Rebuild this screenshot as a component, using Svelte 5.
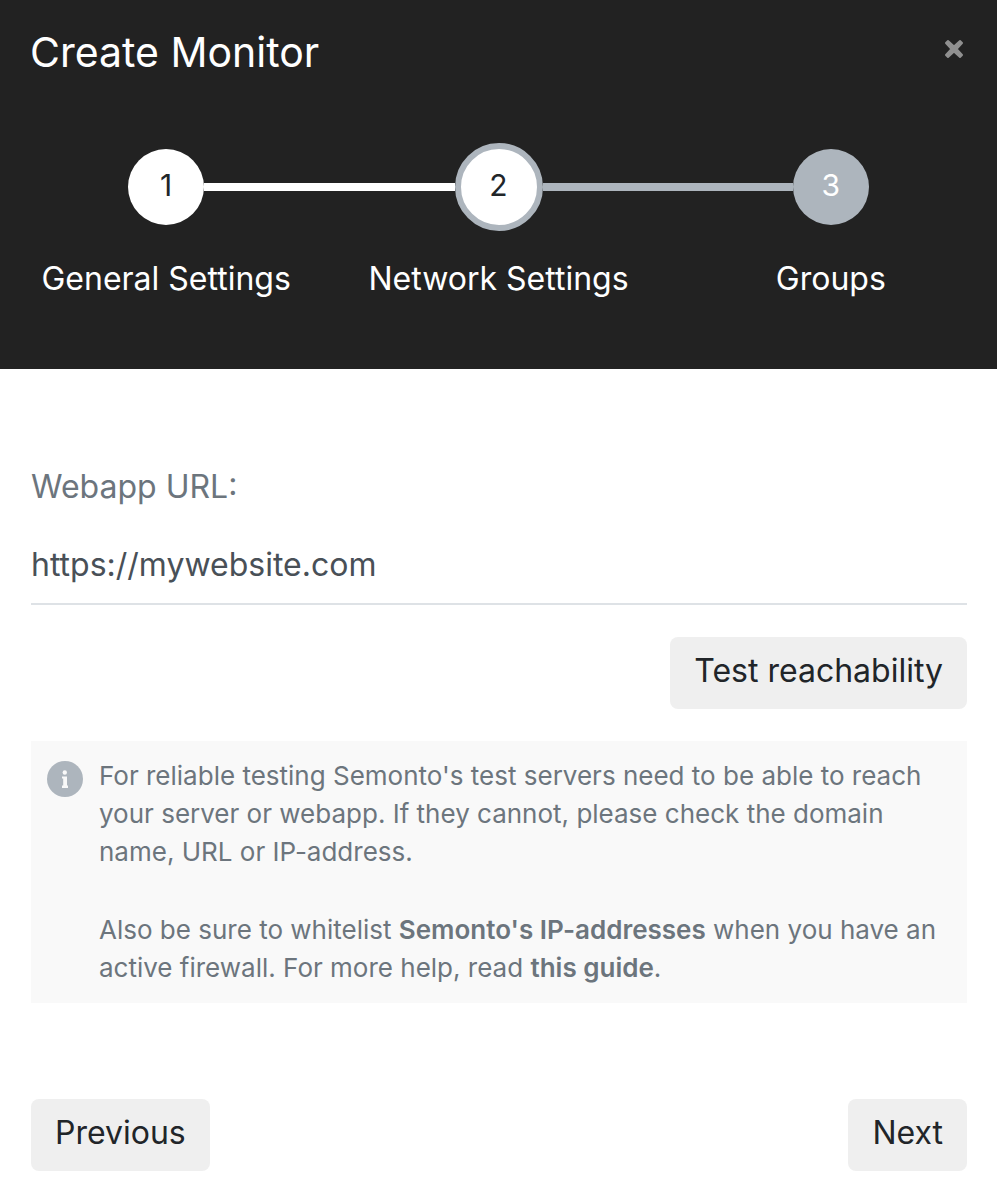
<script>
  const steps = [
    { label: 'General Settings', state: 'done' },
    { label: 'Network Settings', state: 'current' },
    { label: 'Groups', state: 'upcoming' }
  ];
  let url = $state('https://mywebsite.com');
</script>

<main class="dialog">
  <header class="header">
    <div class="title-row">
      <h1>Create Monitor</h1>
      <button class="close" type="button" aria-label="Close">
        <svg viewBox="0 0 20 20" width="20" height="20" aria-hidden="true">
          <path d="M2 4L4 2L10 7.500L16 2L18 4L12.500 10L18 16L16 18L10 12.500L4 18L2 16L7.500 10Z" fill="currentColor" stroke="currentColor" stroke-width="2" stroke-linejoin="round" />
        </svg>
      </button>
    </div>
    <ol class="steps">
      {#each steps as step, i}
        <li class={step.state} aria-current={step.state === 'current' ? 'step' : undefined}>
          <span class="marker">
            <span class="line" class:hidden={i === 0} class:filled={i === 1}></span>
            <span class="circle">{i + 1}</span>
            <span class="line" class:hidden={i === 2} class:filled={i === 0}></span>
          </span>
          <span class="label">{step.label}</span>
        </li>
      {/each}
    </ol>
  </header>

  <form class="body">
    <label for="url">Webapp URL:</label>
    <input id="url" type="text" bind:value={url} />
    <button class="btn test" type="button">Test reachability</button>

    <section class="info">
      <svg class="info-icon" viewBox="0 0 36 36" width="36" height="36" aria-hidden="true">
        <circle cx="18" cy="18" r="18" fill="#adb5bd" />
        <circle cx="17.800" cy="11.500" r="2.200" fill="#f9f9f9" />
        <path d="M15 15.500H20V24.500H21V27H15V24.500H16.200V17.500H15Z" fill="#f9f9f9" />
      </svg>
      <div class="info-text">
        <p>For reliable testing Semonto's test servers need to be able to reach your server or webapp. If they cannot, please check the domain name, URL or IP-address.</p>
        <p>Also be sure to whitelist <a href="#ip-addresses">Semonto's IP-addresses</a> when you have an active firewall. For more help, read <a href="#guide">this guide</a>.</p>
      </div>
    </section>

    <footer class="actions">
      <button class="btn" type="button">Previous</button>
      <button class="btn" type="button">Next</button>
    </footer>
  </form>
</main>

<style>
  :global(body) {
    margin: 0;
    background: #fff;
  }
  .dialog, .dialog * {
    box-sizing: border-box;
  }
  .dialog {
    font-family: Inter, "Open Sans", sans-serif;
    font-size: 32px;
    line-height: 48px;
    font-weight: 400;
    color: #212529;
  }
  .header {
    background: #222;
    color: #fff;
    padding: 28px 0 68px;
  }
  .title-row {
    display: flex;
    justify-content: space-between;
    align-items: center;
    padding: 0 30px;
  }
  h1 {
    margin: 0;
    font-size: 41px;
    line-height: 48px;
    font-weight: 400;
  }
  .close {
    display: flex;
    padding: 0;
    margin: 0 3px 6px 0;
    border: 0;
    background: none;
    color: #909090;
  }
  .steps {
    display: grid;
    grid-template-columns: repeat(3, 1fr);
    margin: 67px 0 0;
    padding: 0;
    list-style: none;
  }
  li {
    display: flex;
    flex-direction: column;
    align-items: center;
    gap: 26px;
  }
  .marker {
    display: flex;
    align-items: center;
    align-self: stretch;
    height: 88px;
  }
  .line {
    flex: 1;
    height: 8px;
    background: #adb5bd;
  }
  .line.filled {
    background: #fff;
  }
  .line.hidden {
    visibility: hidden;
  }
  .circle {
    display: flex;
    justify-content: center;
    width: 76px;
    height: 76px;
    padding: 12px 0 16px;
    border-radius: 50%;
    background: #fff;
    color: #212529;
    font-size: 30px;
  }
  .current .circle {
    box-sizing: content-box;
    height: 48px;
    border: 6px solid #adb5bd;
  }
  .upcoming .circle {
    background: #adb5bd;
    color: #fff;
  }
  .label {
    line-height: 44px;
  }
  .body {
    display: flex;
    flex-direction: column;
    padding: 94px 30px 32px 31px;
  }
  label {
    color: #6c757d;
  }
  input {
    width: 100%;
    height: 76px;
    margin-top: 18px;
    padding: 0 0 4px;
    border: 0;
    border-bottom: 2px solid #dee2e6;
    border-radius: 0;
    background: none;
    font: inherit;
    color: #495057;
    outline: 0;
  }
  .btn {
    height: 72px;
    padding: 10px 24px 14px;
    border: 0;
    border-radius: 8px;
    background: #efefef;
    color: #212529;
    font: inherit;
  }
  .test {
    align-self: flex-end;
    margin-top: 32px;
  }
  .info {
    display: flex;
    gap: 16px;
    margin-top: 32px;
    padding: 16px;
    background: #f9f9f9;
    color: #6c757d;
    font-size: 26px;
    line-height: 38px;
  }
  .info-icon {
    flex: none;
    margin-top: 4px;
  }
  .info p {
    margin: 0;
  }
  .info p + p {
    margin-top: 40px;
  }
  .info a {
    color: inherit;
    font-weight: 600;
    text-decoration: none;
  }
  .actions {
    display: flex;
    justify-content: space-between;
    margin-top: 96px;
  }
</style>
